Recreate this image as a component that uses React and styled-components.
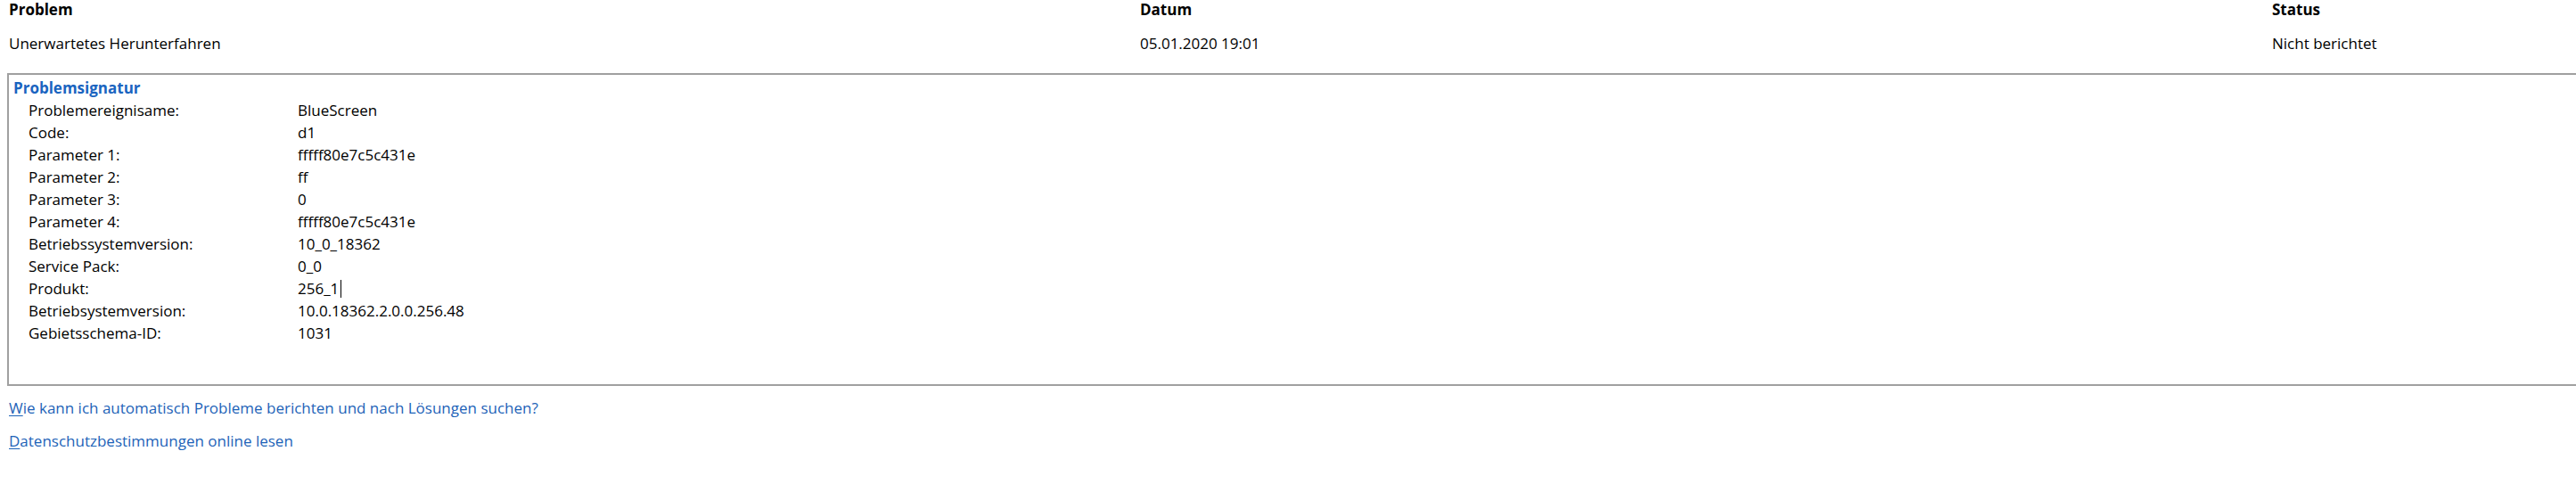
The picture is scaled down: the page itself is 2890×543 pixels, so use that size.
import styled, { createGlobalStyle } from 'styled-components';

const GlobalStyle = createGlobalStyle`
  html, body {
    margin: 0;
    padding: 0;
    background: #ffffff;
    overflow: hidden;
  }
  body {
    font-family: "Segoe UI", "Open Sans", "Noto Sans", sans-serif;
    font-size: 17px;
    color: #000000;
  }
`;

const signature = [
  ['Problemereignisame:', 'BlueScreen'],
  ['Code:', 'd1'],
  ['Parameter 1:', 'fffff80e7c5c431e'],
  ['Parameter 2:', 'ff'],
  ['Parameter 3:', '0'],
  ['Parameter 4:', 'fffff80e7c5c431e'],
  ['Betriebssystemversion:', '10_0_18362'],
  ['Service Pack:', '0_0'],
  ['Produkt:', '256_1', true],
  ['Betriebsystemversion:', '10.0.18362.2.0.0.256.48'],
  ['Gebietsschema-ID:', '1031'],
];

function App() {
  return (
    <Page>
      <GlobalStyle />
      <Table>
        <HeadCell>Problem</HeadCell>
        <HeadCell>Datum</HeadCell>
        <HeadCell>Status</HeadCell>
        <Cell>Unerwartetes Herunterfahren</Cell>
        <Cell>05.01.2020 19:01</Cell>
        <Cell>Nicht berichtet</Cell>
      </Table>
      <Details>
        <Title>Problemsignatur</Title>
        <Rows>
          {signature.map(([label, value, caret]) => (
            <Row key={label + value}>
              <span>{label}</span>
              <span>
                {value}
                {caret && <Caret />}
              </span>
            </Row>
          ))}
        </Rows>
      </Details>
      <Links>
        <Link href="#">
          <u>W</u>ie kann ich automatisch Probleme berichten und nach Lösungen suchen?
        </Link>
        <Link href="#">
          <u>D</u>atenschutzbestimmungen online lesen
        </Link>
      </Links>
    </Page>
  );
}

export default App;

const Page = styled.div`
  width: 2890px;
  height: 543px;
`;
const Table = styled.div`
  display: grid;
  grid-template-columns: 1269px 1270px 1fr;
  padding-left: 10px;
`;
const HeadCell = styled.div`
  font-weight: 700;
  line-height: 23px;
  margin-top: -1px;
`;
const Cell = styled.div`
  line-height: 25px;
  margin-top: 14px;
`;
const Details = styled.section`
  margin: 21px 0 0 8px;
  height: 344px;
  border: 2px solid #a0a0a0;
  border-right: none;
  padding: 3px 0 0 5px;
`;
const Title = styled.div`
  color: #1a64c0;
  font-weight: 700;
  line-height: 23px;
`;
const Rows = styled.div`
  display: flex;
  flex-direction: column;
  padding-left: 17px;
  margin-top: 1px;
`;
const Row = styled.div`
  display: grid;
  grid-template-columns: 302px 1fr;
  line-height: 25px;
`;
const Caret = styled.span`
  display: inline-block;
  width: 1px;
  height: 20px;
  margin-left: 2px;
  background: #000000;
  vertical-align: -4px;
`;
const Links = styled.div`
  display: flex;
  flex-direction: column;
  align-items: flex-start;
  gap: 12px;
  padding: 12px 0 0 10px;
`;
const Link = styled.a`
  color: #1e63b8;
  text-decoration: none;
  line-height: 25px;
  u {
    text-decoration: underline;
    text-underline-offset: 2px;
  }
`;
